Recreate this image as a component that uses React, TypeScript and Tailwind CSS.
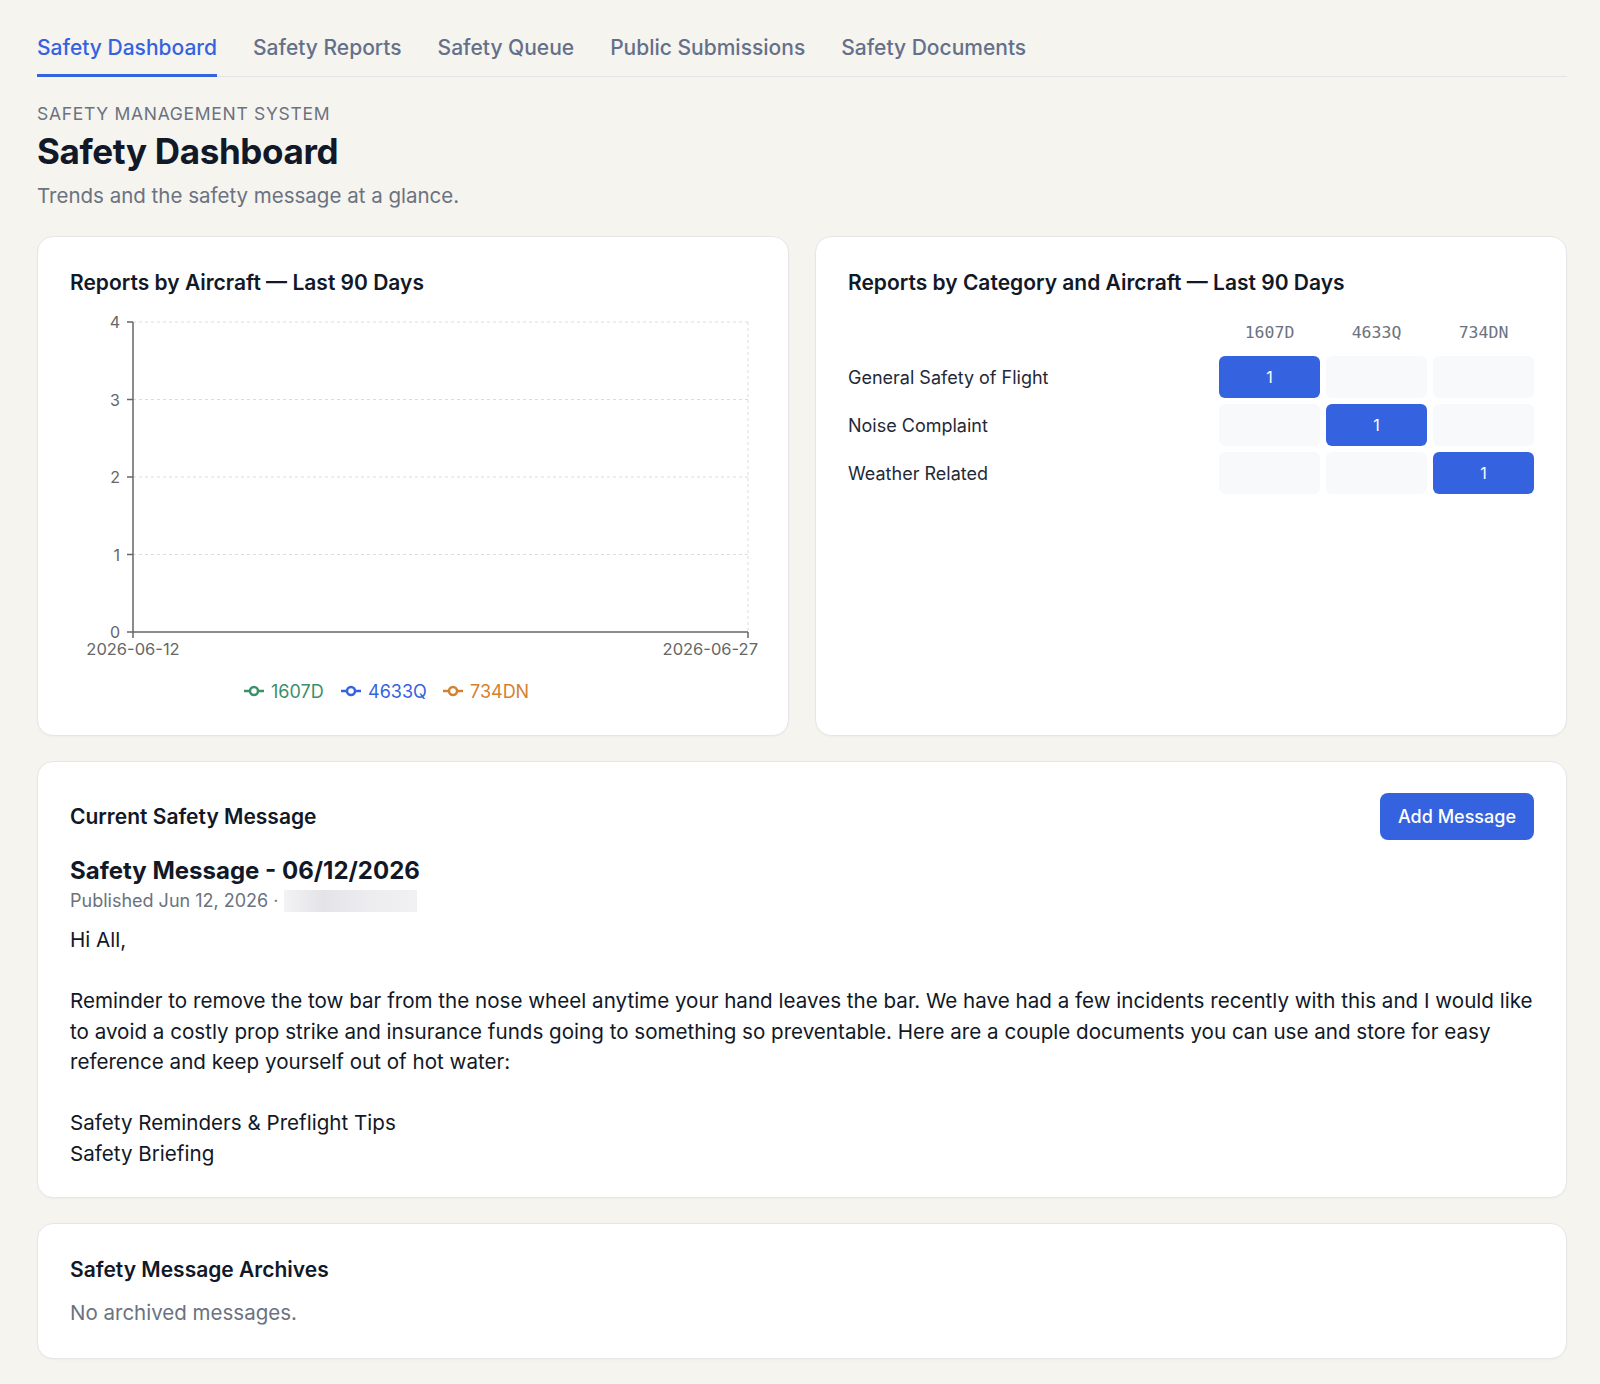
import React from "react";

const tabs = [
  "Safety Dashboard",
  "Safety Reports",
  "Safety Queue",
  "Public Submissions",
  "Safety Documents",
];

const aircraft = [
  { tail: "1607D", color: "#3b8f6a" },
  { tail: "4633Q", color: "#3563e0" },
  { tail: "734DN", color: "#d4812f" },
];

const categories = [
  { name: "General Safety of Flight", counts: [1, 0, 0] },
  { name: "Noise Complaint", counts: [0, 1, 0] },
  { name: "Weather Related", counts: [0, 0, 1] },
];

const message = `Hi All,

Reminder to remove the tow bar from the nose wheel anytime your hand leaves the bar. We have had a few incidents recently with this and I would like to avoid a costly prop strike and insurance funds going to something so preventable. Here are a couple documents you can use and store for easy reference and keep yourself out of hot water:

Safety Reminders & Preflight Tips
Safety Briefing`;

const Card = ({
  className = "",
  children,
}: {
  className?: string;
  children: React.ReactNode;
}) => (
  <div
    className={`rounded-2xl border border-[#e6e6ea] bg-white shadow-[0_1px_2px_rgba(0,0,0,0.03)] ${className}`}
  >
    {children}
  </div>
);

const LineChart = () => {
  // plot area in svg coords
  const left = 63;
  const right = 678;
  const top = 17;
  const bottom = 327;
  const step = (bottom - top) / 4;
  const legendX = [174, 271, 373];

  return (
    <svg width="688" height="398" className="mt-2 block">
      {[0, 1, 2, 3].map((i) => (
        <line
          key={i}
          x1={left}
          x2={right}
          y1={top + i * step}
          y2={top + i * step}
          stroke="#dcdcdc"
          strokeDasharray="3 3"
        />
      ))}
      <line
        x1={right}
        x2={right}
        y1={top}
        y2={bottom}
        stroke="#dcdcdc"
        strokeDasharray="3 3"
      />
      <line x1={left} x2={left} y1={top} y2={bottom} stroke="#666" strokeWidth="1.5" />
      <line x1={left} x2={right} y1={bottom} y2={bottom} stroke="#666" strokeWidth="1.5" />
      {[4, 3, 2, 1, 0].map((v, i) => (
        <g key={v}>
          <line
            x1={left - 6}
            x2={left}
            y1={top + i * step}
            y2={top + i * step}
            stroke="#666"
            strokeWidth="1.5"
          />
          <text
            x={left - 13}
            y={top + i * step + 6}
            textAnchor="end"
            fill="#666"
            fontSize="16"
          >
            {v}
          </text>
        </g>
      ))}
      <line x1={left} x2={left} y1={bottom} y2={bottom + 6} stroke="#666" strokeWidth="1.5" />
      <line x1={right} x2={right} y1={bottom} y2={bottom + 6} stroke="#666" strokeWidth="1.5" />
      <text x={left} y={bottom + 23} textAnchor="middle" fill="#666" fontSize="16.5">
        2026-06-12
      </text>
      <text x={688} y={bottom + 23} textAnchor="end" fill="#666" fontSize="16.5">
        2026-06-27
      </text>
      {aircraft.map((a, i) => (
        <g key={a.tail}>
          <line
            x1={legendX[i]}
            x2={legendX[i] + 20}
            y1={386}
            y2={386}
            stroke={a.color}
            strokeWidth="2.5"
          />
          <circle cx={legendX[i] + 10} cy={386} r="4" fill="#fff" stroke={a.color} strokeWidth="2.5" />
          <text x={legendX[i] + 27} y={392.5} fill={a.color} fontSize="18">
            {a.tail}
          </text>
        </g>
      ))}
    </svg>
  );
};

const Heatmap = () => (
  <div className="mt-6 grid grid-cols-[1fr_101px_101px_101px] gap-x-1.5 gap-y-1.5">
    <div />
    {aircraft.map((a) => (
      <div
        key={a.tail}
        className="mb-[5px] h-6 text-center font-['DejaVu_Sans_Mono',monospace] text-[16.5px] leading-6 text-[#6b7280]"
      >
        {a.tail}
      </div>
    ))}
    {categories.map((c) => (
      <React.Fragment key={c.name}>
        <div className="flex h-[42px] items-center text-[18px] text-[#1f2937]">
          {c.name}
        </div>
        {c.counts.map((n, j) => (
          <div
            key={j}
            className={
              n > 0
                ? "flex h-[42px] items-center justify-center rounded-md bg-[#3563e0] text-[16px] text-white"
                : "h-[42px] rounded-md bg-[#f8f9fb]"
            }
          >
            {n > 0 ? n : ""}
          </div>
        ))}
      </React.Fragment>
    ))}
  </div>
);

export default function App() {
  return (
    <div className="min-h-screen bg-[#f6f4ef] pb-[25px] pl-[37px] pr-[33px] pt-6 font-['Inter',sans-serif] text-[#111827]">
      <nav className="flex gap-9 border-b border-[#e3e3ea]">
        {tabs.map((t, i) => (
          <div
            key={t}
            className={
              i === 0
                ? "-mb-px border-b-[3px] border-[#3563e0] pb-3 pt-[10px] text-[21px] font-medium leading-7 text-[#3563e0]"
                : "-mb-px border-b-[3px] border-transparent pb-3 pt-[10px] text-[21px] font-medium leading-7 text-[#64708a]"
            }
          >
            {t}
          </div>
        ))}
      </nav>

      <div className="mt-[25px] text-[17.5px] uppercase leading-6 tracking-[0.04em] text-[#6b7280]">
        Safety Management System
      </div>
      <h1 className="mt-[5px] text-[35px] font-bold leading-10 tracking-[-0.01em] text-[#111827]">
        Safety Dashboard
      </h1>
      <p className="mt-[11px] text-[20.5px] leading-7 text-[#6b7280]">
        Trends and the safety message at a glance.
      </p>

      <div className="mt-[26px] grid grid-cols-2 gap-[26px]">
        <Card className="px-8 pb-8 pt-8">
          <h2 className="text-[21px] font-semibold leading-7">
            Reports by Aircraft — Last 90 Days
          </h2>
          <LineChart />
        </Card>
        <Card className="px-8 pt-8">
          <h2 className="text-[21px] font-semibold leading-7">
            Reports by Category and Aircraft — Last 90 Days
          </h2>
          <Heatmap />
        </Card>
      </div>

      <Card className="mt-[25px] px-8 pb-[28px] pt-[31px]">
        <div className="flex items-center justify-between">
          <h2 className="text-[21px] font-semibold leading-7">Current Safety Message</h2>
          <button className="h-[47px] rounded-lg bg-[#3563e0] px-[18px] text-[18px] font-medium text-white">
            Add Message
          </button>
        </div>
        <h3 className="mt-[15px] text-[24px] font-bold leading-8">
          Safety Message - 06/12/2026
        </h3>
        <div className="mt-[2px] flex items-center text-[18px] leading-6 text-[#6b7280]">
          <span>Published Jun 12, 2026 ·</span>
          <span className="ml-[5px] inline-block h-[22px] w-[133px] bg-[linear-gradient(90deg,#f3f3f5_0%,#e4e4e8_30%,#ececef_60%,#f1f1f3_100%)]" />
        </div>
        <p className="mt-3 whitespace-pre-line text-[20.6px] leading-[30.5px] text-[#111827]">
          {message}
        </p>
      </Card>

      <Card className="mt-[25px] px-8 pb-[30px] pt-8">
        <h2 className="text-[21px] font-semibold leading-7">Safety Message Archives</h2>
        <p className="mt-[14px] text-[20.5px] leading-[30px] text-[#6b7280]">
          No archived messages.
        </p>
      </Card>
    </div>
  );
}
